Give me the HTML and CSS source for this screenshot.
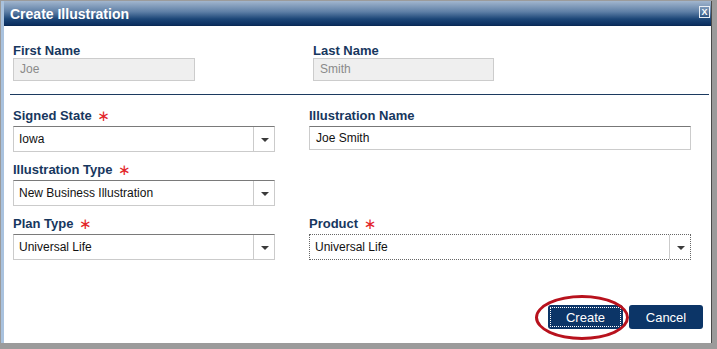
FILE: index.html
```html
<!DOCTYPE html>
<html lang="en">
<head>
    <meta charset="UTF-8">
    <title>Create Illustration</title>
    <link rel="stylesheet" href="styles.css">
</head>
<body>

<div class="dialog">
    <!-- Title bar -->
    <div class="titlebar">
        <span class="title">Create Illustration</span>
        <span class="close">X</span>
    </div>

    <div class="content">
        <!-- Insured names (read only) -->
        <div class="names">
            <div class="field">
                <label>First Name</label>
                <div class="input readonly">Joe</div>
            </div>
            <div class="field last">
                <label>Last Name</label>
                <div class="input readonly">Smith</div>
            </div>
        </div>

        <hr class="divider">

        <div class="grid">
            <div class="field">
                <label>Signed State <span class="req">&lowast;</span></label>
                <div class="dropdown">
                    <span class="value">Iowa</span>
                    <span class="arrow"></span>
                </div>
            </div>
            <div class="field">
                <label>Illustration Name</label>
                <div class="input text">Joe Smith</div>
            </div>

            <div class="field">
                <label>Illustration Type <span class="req">&lowast;</span></label>
                <div class="dropdown">
                    <span class="value">New Business Illustration</span>
                    <span class="arrow"></span>
                </div>
            </div>
            <div></div>

            <div class="field">
                <label>Plan Type <span class="req">&lowast;</span></label>
                <div class="dropdown">
                    <span class="value">Universal Life</span>
                    <span class="arrow"></span>
                </div>
            </div>
            <div class="field">
                <label>Product <span class="req">&lowast;</span></label>
                <div class="dropdown focused">
                    <span class="value">Universal Life</span>
                    <span class="arrow"></span>
                </div>
            </div>
        </div>

        <div class="actions">
            <div class="btn-wrap">
                <button class="btn primary">Create</button>
                <span class="circle"></span>
            </div>
            <button class="btn">Cancel</button>
        </div>
    </div>
</div>

</body>
</html>
```

FILE: styles.css
```css
body {
    margin: 0;
    padding: 0;
    font-family: "Liberation Sans", Arial, sans-serif;
    background-color: #9b9b9b;
    height: 349px;
    overflow: hidden;
}
.dialog {
    margin: 1px 0 0 1px;
    width: 707px;
    height: 342px;
    background-color: white;
    border-left: 3px solid #a9c2de;
    box-shadow: 1px 0 0 #4a4a4a;
    box-sizing: content-box;
}
.titlebar {
    height: 25px;
    display: flex;
    align-items: center;
    justify-content: space-between;
    padding: 0 1px 0 6px;
    background: linear-gradient(#a2b6ce, #5e7fa6 45%, #1c4677 75%, #0b2f60);
    border-bottom: 1px solid #0a2a55;
    box-sizing: border-box;
}
.title {
    color: white;
    font-weight: bold;
    font-size: 14px;
    padding-top: 2px;
}
.close {
    width: 9px;
    height: 10px;
    border: 1px solid #e8eef5;
    color: white;
    font-size: 9px;
    font-weight: bold;
    line-height: 10px;
    text-align: center;
    margin-top: -2px;
}
.content {
    padding: 0 2px 0 9px;
}
label {
    display: block;
    height: 15px;
    color: #17375e;
    font-weight: bold;
    font-size: 13px;
    line-height: 15px;
    margin-bottom: 3px;
    overflow: visible;
}
.req {
    color: #e3262b;
    font-family: "DejaVu Sans", sans-serif;
    font-weight: normal;
    font-size: 15px;
    line-height: 15px;
    vertical-align: top;
    position: relative;
    top: 1px;
    margin-left: 2px;
}
.names {
    display: flex;
    gap: 118px;
    padding-top: 17px;
}
.names label {
    margin-bottom: 0;
}
.names .last .input {
    width: 181px;
}
.input {
    box-sizing: border-box;
    font-size: 12px;
    color: #111;
    padding: 0 6px;
    border: 1px solid #cccccc;
}
.input.readonly {
    width: 182px;
    height: 23px;
    line-height: 21px;
    background-color: #efefef;
    color: #8a8a8a;
}
.input.text {
    width: 382px;
    height: 24px;
    line-height: 22px;
    margin-top: 1px;
    border-top-color: #777;
}
.divider {
    border: none;
    border-top: 1px solid #1c3a60;
    margin: 13px 0 0 -3px;
}
.grid {
    display: grid;
    grid-template-columns: 262px 382px;
    column-gap: 34px;
    row-gap: 10px;
    margin-top: 13px;
}
.dropdown {
    display: flex;
    height: 26px;
    box-sizing: border-box;
    border: 1px solid #cbcbcb;
    border-top-color: #7a7a7a;
    font-size: 12px;
    color: #111;
}
.dropdown.focused {
    border: 1px dotted #666;
}
.value {
    flex: 1;
    padding: 0 5px;
    line-height: 24px;
}
.arrow {
    width: 20px;
    border-left: 1px solid #cbcbcb;
    position: relative;
}
.arrow::after {
    content: "";
    position: absolute;
    left: 7px;
    top: 11px;
    border-left: 4px solid transparent;
    border-right: 4px solid transparent;
    border-top: 4px solid #3a3a3a;
}
.actions {
    display: flex;
    justify-content: flex-end;
    gap: 6px;
    margin: 45px 6px 0 0;
}
.btn-wrap {
    position: relative;
}
.btn {
    width: 74px;
    height: 24px;
    border: none;
    border-radius: 3px;
    background-color: #0c3567;
    color: white;
    font-family: "Liberation Sans", Arial, sans-serif;
    font-size: 13px;
    cursor: pointer;
}
.btn.primary {
    width: 75px;
    outline: 1px dotted white;
    outline-offset: -3px;
}
.circle {
    position: absolute;
    left: -13px;
    top: -10px;
    width: 94px;
    height: 45px;
    border: 3px solid #b8121d;
    border-radius: 50%;
    box-sizing: border-box;
    pointer-events: none;
}
```
